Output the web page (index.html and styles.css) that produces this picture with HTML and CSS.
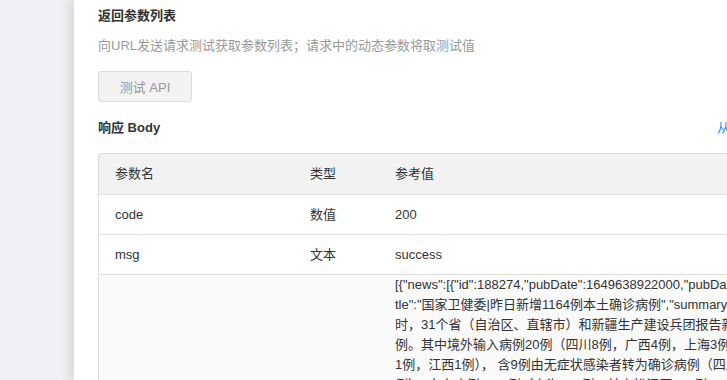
FILE: index.html
```html
<!DOCTYPE html>
<html lang="zh">
<head>
<meta charset="utf-8">
<link rel="stylesheet" href="styles.css">
</head>
<body>
<div class="page">
  <div class="backdrop"></div>
  <main class="panel">
    <div class="content">
      <h2 class="title">返回参数列表</h2>
      <p class="desc">向URL发送请求测试获取参数列表；请求中的动态参数将取测试值</p>
      <button class="btn">测试 API</button>
      <div class="resp-head">
        <h3 class="title">响应 Body</h3>
        <a class="link">从示例填充</a>
      </div>
      <table class="params">
        <colgroup>
          <col class="c1"><col class="c2"><col class="c3">
        </colgroup>
        <thead>
          <tr><th>参数名</th><th>类型</th><th>参考值</th></tr>
        </thead>
        <tbody>
          <tr><td>code</td><td>数值</td><td>200</td></tr>
          <tr><td>msg</td><td>文本</td><td>success</td></tr>
          <tr class="long">
            <td></td><td></td>
            <td>
              <div class="ln">[{"news":[{"id":188274,"pubDate":1649638922000,"pubDateStr":"2小时前","ti</div>
              <div class="ln">tle":"国家卫健委|昨日新增1164例本土确诊病例","summary":"4月10日0—24</div>
              <div class="ln">时，31个省（自治区、直辖市）和新疆生产建设兵团报告新增确诊病例1184</div>
              <div class="ln">例。其中境外输入病例20例（四川8例，广西4例，上海3例，</div>
              <div class="ln">1例，江西1例）， 含9例由无症状感染者转为确诊病例（四川</div>
              <div class="ln">例）；本土病例1164例（上海914例，其中松江区291例，</div>
            </td>
          </tr>
        </tbody>
      </table>
    </div>
  </main>
</div>
</body>
</html>
```

FILE: styles.css
```css
html, body {
  margin: 0;
  padding: 0;
  overflow: hidden;
  height: 100%;
}
body {
  font-family: "Liberation Sans", "Noto Sans CJK SC", sans-serif;
  font-size: 13px;
  color: #333;
  background: #f0f0f4;
}
.page {
  display: flex;
  height: 380px;
}
.backdrop {
  width: 74px;
  flex: none;
  background: #f0f0f4;
}
.panel {
  flex: 1;
  min-width: 0;
  background: #fff;
  box-shadow: -3px 0 12px rgba(0, 0, 0, 0.13);
  padding: 6px 0 0 24px;
  overflow: hidden;
  position: relative;
}
.content {
  width: 684px;
}
.title {
  margin: 0;
  font-size: 13px;
  line-height: 20px;
  font-weight: bold;
  color: #333;
}
.desc {
  margin: 10px 0 0;
  line-height: 20px;
  color: #999;
}
.btn {
  display: block;
  margin-top: 15px;
  width: 94px;
  height: 31px;
  padding: 0;
  font-family: inherit;
  font-size: 13px;
  color: #999;
  background: #f2f2f2;
  border: 1px solid #dcdcdc;
  border-radius: 3px;
}
.resp-head {
  display: flex;
  justify-content: space-between;
  align-items: center;
  margin-top: 16px;
}
.link {
  color: #1e90ff;
  line-height: 20px;
  white-space: nowrap;
}
.params {
  margin-top: 15px;
  width: 684px;
  border-collapse: separate;
  border-spacing: 0;
  border: 1px solid #dddddd;
  border-bottom: none;
  border-radius: 3px 3px 0 0;
  table-layout: fixed;
}
.c1 { width: 195px; }
.c2 { width: 85px; }
.params th,
.params td {
  text-align: left;
  font-weight: normal;
  padding: 0 0 0 16px;
  line-height: 20px;
  border-bottom: 1px solid #e0e0e0;
  vertical-align: middle;
}
.params th {
  height: 40px;
  background: #f2f2f2;
  color: #333;
}
.params td {
  height: 39px;
}
.params tr.long td {
  background: #fafafa;
  vertical-align: top;
  padding-top: 0;
  height: 120px;
}
.ln {
  white-space: pre;
  line-height: 20px;
}
```
